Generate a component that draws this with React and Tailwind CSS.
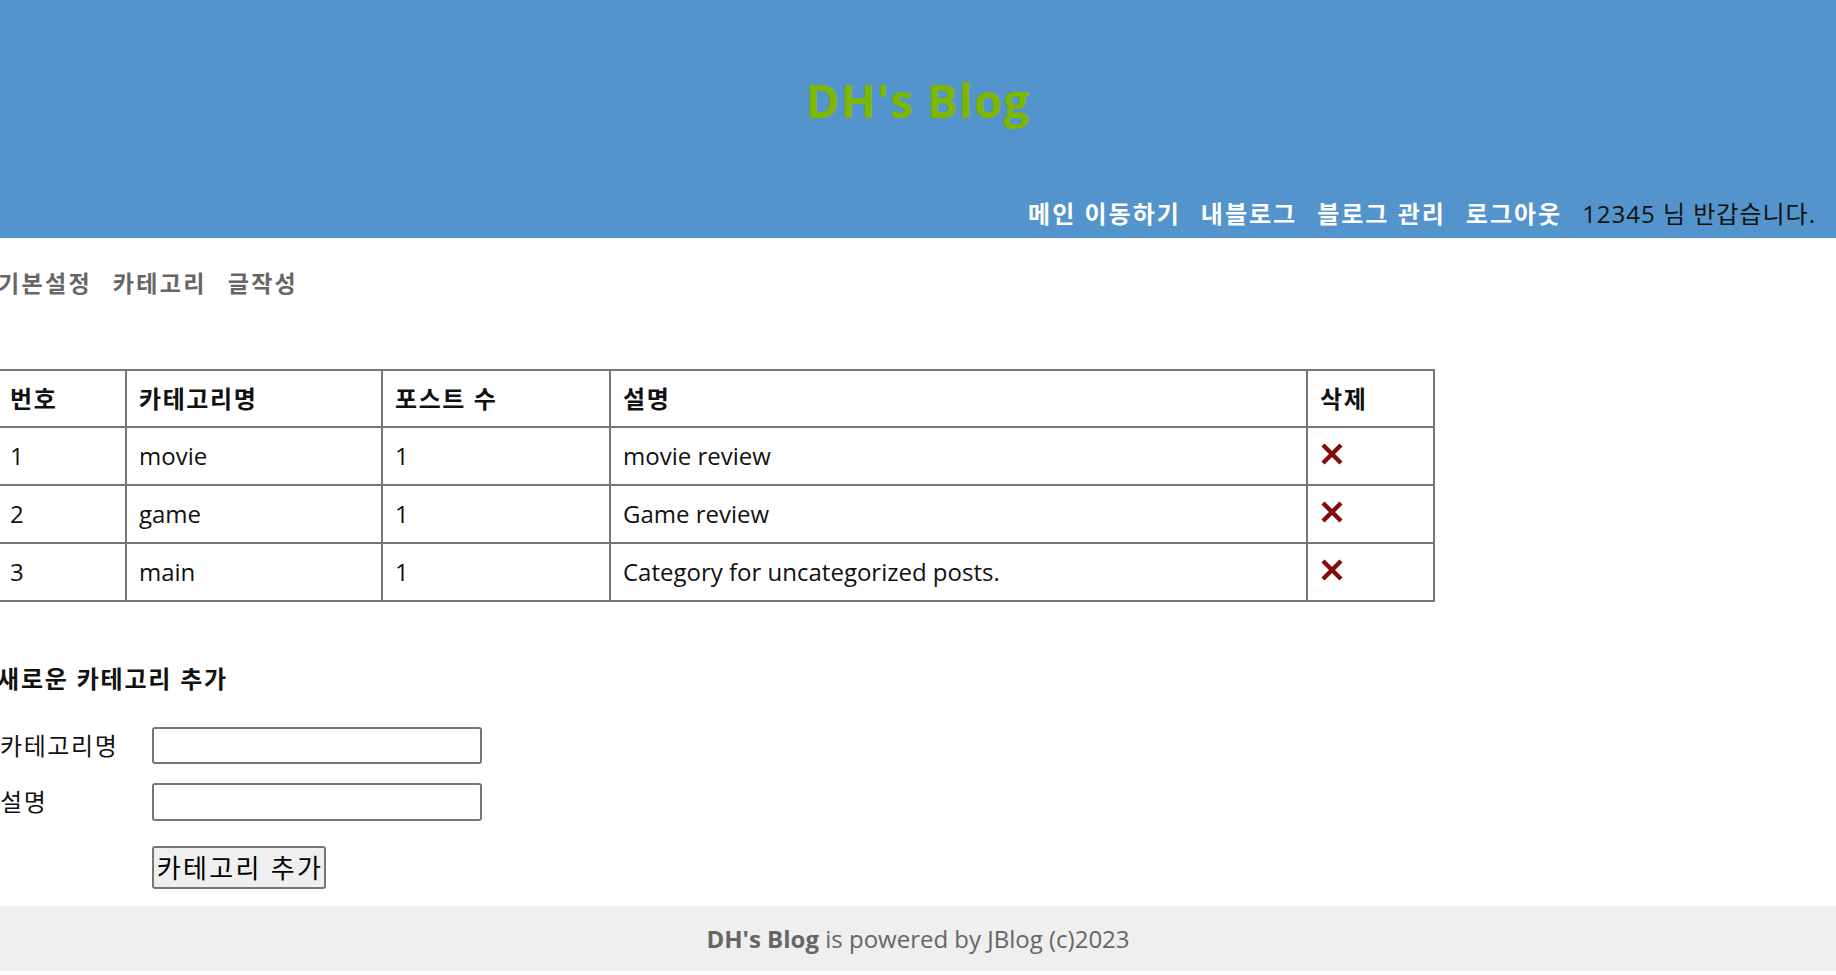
const categories = [
  { id: 1, name: 'movie', posts: 1, desc: 'movie review' },
  { id: 2, name: 'game', posts: 1, desc: 'Game review' },
  { id: 3, name: 'main', posts: 1, desc: 'Category for uncategorized posts.' },
];

function DeleteIcon() {
  return (
    <svg width="26" height="24" viewBox="0 0 26 24" className="block">
      <path d="M4 3L22 21M22 3L4 21" stroke="#850a0a" strokeWidth="4.4" />
    </svg>
  );
}

function Header() {
  return (
    <header className="h-[238px] bg-[#5394cc] flex flex-col">
      <h1 className="pt-[77px] text-center text-[46px] leading-none font-bold tracking-[1px] text-[#7db700]">
        DH's Blog
      </h1>
      <nav className="mt-auto pb-[12px] pr-[20px] flex justify-end items-center gap-[20px] text-[24px] leading-none">
        <a className="font-bold tracking-[2px] text-white">메인 이동하기</a>
        <a className="font-bold tracking-[2px] text-white">내블로그</a>
        <a className="font-bold tracking-[2px] text-white">블로그 관리</a>
        <a className="font-bold tracking-[2px] text-white">로그아웃</a>
        <span className="tracking-[1px] text-[#111]">12345 님 반갑습니다.</span>
      </nav>
    </header>
  );
}

export default function App() {
  return (
    <div className="min-h-[975px] bg-white font-['Open_Sans','Noto_Sans_CJK_KR',sans-serif] text-[#111]">
      <Header />

      <main>
        {/* admin menu */}
        <ul className="-ml-[2px] mt-[34px] flex gap-[21px] text-[23px] leading-none font-bold tracking-[2.3px] text-[#666]">
          <li>기본설정</li>
          <li>카테고리</li>
          <li>글작성</li>
        </ul>

        {/* category list */}
        <table className="-ml-[4px] mt-[74px] w-[1437px] table-fixed border-collapse border-2 border-[#777] text-[24px]">
          <colgroup>
            <col className="w-[129px]" />
            <col className="w-[256px]" />
            <col className="w-[228px]" />
            <col className="w-[697px]" />
            <col className="w-[127px]" />
          </colgroup>
          <thead>
            <tr>
              {['번호', '카테고리명', '포스트 수', '설명', '삭제'].map((h) => (
                <th key={h} className="h-[57px] border-2 border-[#777] px-[12px] text-left font-bold leading-none tracking-[1.6px]">
                  {h}
                </th>
              ))}
            </tr>
          </thead>
          <tbody>
            {categories.map((c) => (
              <tr key={c.id}>
                <td className="h-[58px] border-2 border-[#777] px-[12px] leading-none">{c.id}</td>
                <td className="h-[58px] border-2 border-[#777] px-[12px] leading-none">{c.name}</td>
                <td className="h-[58px] border-2 border-[#777] px-[12px] leading-none">{c.posts}</td>
                <td className="h-[58px] border-2 border-[#777] px-[12px] leading-none">{c.desc}</td>
                <td className="h-[58px] border-2 border-[#777] px-[11px] leading-none">
                  <div className="pb-[4px]">
                    <DeleteIcon />
                  </div>
                </td>
              </tr>
            ))}
          </tbody>
        </table>

        {/* new category */}
        <h2 className="-ml-[3px] mt-[65px] text-[24px] leading-none font-bold tracking-[1.8px]">새로운 카테고리 추가</h2>

        <div className="mt-[36px] flex flex-col text-[24px] leading-none">
          <div className="flex items-center">
            <label className="w-[152px] tracking-[1.6px]">카테고리명</label>
            <input className="h-[37px] w-[330px] rounded-[3px] border-2 border-[#767676] bg-white px-[4px]" />
          </div>
          <div className="mt-[19px] flex items-center">
            <label className="w-[152px] tracking-[1.6px]">설명</label>
            <input className="h-[38px] w-[330px] rounded-[3px] border-2 border-[#767676] bg-white px-[4px]" />
          </div>
          <div className="mt-[25px] pl-[152px]">
            <button className="h-[43px] w-[174px] rounded-[3px] border-2 border-[#767676] bg-[#efefef] pl-[2px] text-[26px] leading-none tracking-[2.3px] text-black">
              카테고리 추가
            </button>
          </div>
        </div>
      </main>

      <footer className="mt-[17px] h-[65px] bg-[#efefef] flex items-center justify-center text-[24px] text-[#666]">
        <span>
          <b>DH's Blog</b> is powered by JBlog (c)2023
        </span>
      </footer>
    </div>
  );
}
